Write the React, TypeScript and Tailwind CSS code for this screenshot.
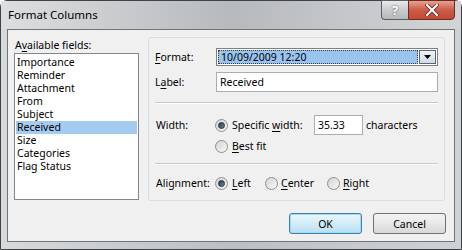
import React from "react";

const font = { fontFamily: '"Noto Sans", "Open Sans", sans-serif' };

function U({ children }: { children: React.ReactNode }) {
  return <span className="underline underline-offset-[2px] decoration-[1px]">{children}</span>;
}

function Radio({ checked }: { checked?: boolean }) {
  return (
    <div className="w-[13px] h-[13px] rounded-full border border-[#8e8f8f] bg-gradient-to-br from-[#d4d4d4] to-[#f8f8f8] flex items-center justify-center shrink-0">
      {checked && (
        <div className="w-[7px] h-[7px] rounded-full bg-gradient-to-br from-[#2c3c4c] to-[#6a8aa0] border border-[#1e2c3a]" />
      )}
    </div>
  );
}

export default function App() {
  const items = [
    "Importance",
    "Reminder",
    "Attachment",
    "From",
    "Subject",
    "Received",
    "Size",
    "Categories",
    "Flag Status",
  ];
  return (
    <div className="w-[462px] h-[250px] bg-white text-[10.5px] leading-[14px] text-black" style={font}>
      <div className="w-full h-full rounded-t-[7px] border border-[#3f4346] bg-gradient-to-r from-[#d7d9db] via-[#bcc0c3] to-[#cfd2d4] flex flex-col">
        {/* title bar */}
        <div className="h-[28px] flex items-start relative shrink-0 bg-gradient-to-r from-[#dcdedf] via-[#b7babd] to-[#d2d4d6]">
          <div className="pl-[7px] pt-[6px] text-[11.5px] leading-[16px]">Format Columns</div>
          <div className="ml-auto mr-[6px] flex h-[20px] -mt-[1px]">
            <div className="w-[27px] h-full border border-[#5b5e61] border-r-0 rounded-bl-[4px] bg-gradient-to-b from-[#e8eaec] via-[#c9ccce] to-[#b6b9bc] flex items-center justify-center text-[13px] font-bold text-white [text-shadow:0_0_2px_#444]">
              ?
            </div>
            <div className="w-[47px] h-full border border-[#6e2a22] rounded-br-[4px] bg-gradient-to-b from-[#e3a393] via-[#cc5a44] to-[#c24a36] flex items-center justify-center">
              <svg width="14" height="12" viewBox="0 0 14 12">
                <path d="M2 1 L12 11 M12 1 L2 11" stroke="#5a1a10" strokeWidth="3.6" strokeLinecap="round" />
                <path d="M2 1 L12 11 M12 1 L2 11" stroke="#ffffff" strokeWidth="2.2" strokeLinecap="round" />
              </svg>
            </div>
          </div>
        </div>
        {/* client area */}
        <div className="ml-[6px] w-[448px] h-[213px] border border-[#6f7478] bg-[#f0f0f0] flex shrink-0">
          {/* left column */}
          <div className="pl-[6px] pt-[8px] flex flex-col">
            <div className="leading-[14px] pl-[1px]">
              A<U>v</U>ailable fields:
            </div>
            <div className="mt-[1px] w-[125px] h-[147px] border border-[#828790] bg-white pt-[2px] px-[1px]">
              {items.map((it) => (
                <div
                  key={it}
                  className={
                    "h-[13px] leading-[13px] pl-[1px] " + (it === "Received" ? "bg-[#a6cbf1]" : "")
                  }
                >
                  {it}
                </div>
              ))}
            </div>
          </div>
          {/* right column */}
          <div className="ml-[9px] pt-[7px] w-[298px] flex flex-col">
            <div className="w-[297px] h-[164px] border border-[#d5dfe5] rounded-[3px] pl-[6px] pr-[6px] pt-[10px] flex flex-col">
              {/* Format */}
              <div className="flex items-center h-[18px]">
                <div className="w-[61px]">
                  <U>F</U>ormat:
                </div>
                <div className="w-[222px] h-[18px] border border-[#7b8085] bg-white flex items-stretch p-[1px]">
                  <div className="flex-1 bg-[#99c4f0] border border-dotted border-[#3a3a3a] leading-[12px] pl-[2px]">
                    10/09/2009 12:20
                  </div>
                  <div className="w-[17px] ml-[1px] border border-[#5d6670] bg-gradient-to-b from-[#eef3f7] to-[#cfdbe5] flex items-center justify-center">
                    <svg width="7" height="4" viewBox="0 0 7 4">
                      <path d="M0 0 H7 L3.5 4 Z" fill="#000" />
                    </svg>
                  </div>
                </div>
              </div>
              {/* Label */}
              <div className="flex items-center h-[20px] mt-[6px]">
                <div className="w-[61px]">
                  L<U>a</U>bel:
                </div>
                <div className="w-[222px] h-[20px] border border-[#abadb3] bg-white leading-[18px] pl-[3px]">
                  Received
                </div>
              </div>
              {/* separator */}
              <div className="mt-[10px] w-[283px] border-t border-[#c5c9cc] border-b border-b-white" />
              {/* Width */}
              <div className="flex items-center h-[20px] mt-[11px]">
                <div className="w-[60px] pl-[1px]">Width:</div>
                <Radio checked />
                <div className="ml-[4px] w-[82px]">
                  Specific <U>w</U>idth:
                </div>
                <div className="w-[49px] h-[20px] border border-[#abadb3] bg-white leading-[18px] pl-[3px]">
                  35.33
                </div>
                <div className="ml-[3px]">characters</div>
              </div>
              <div className="flex items-center h-[16px] mt-[3px]">
                <div className="w-[60px]" />
                <Radio />
                <div className="ml-[4px]">
                  <U>B</U>est fit
                </div>
              </div>
              {/* separator */}
              <div className="mt-[9px] w-[283px] border-t border-[#c5c9cc] border-b border-b-white" />
              {/* Alignment */}
              <div className="flex items-center h-[16px] mt-[10px]">
                <div className="w-[60px] pl-[1px]">Alignment:</div>
                <Radio checked />
                <div className="ml-[4px] w-[33px]">
                  <U>L</U>eft
                </div>
                <Radio />
                <div className="ml-[3px] w-[46px]">
                  <U>C</U>enter
                </div>
                <Radio />
                <div className="ml-[3px]">
                  <U>R</U>ight
                </div>
              </div>
            </div>
            {/* buttons */}
            <div className="mt-[12px] flex justify-end gap-[11px]">
              <div className="w-[73px] h-[21px] rounded-[3px] border border-[#3c7fb1] bg-gradient-to-b from-[#ecf7fd] via-[#d2ecf9] to-[#b7dff3] flex items-center justify-center shadow-[inset_0_0_0_1px_#9fdcf4]">
                OK
              </div>
              <div className="w-[73px] h-[21px] rounded-[3px] border border-[#707070] bg-gradient-to-b from-[#f4f4f4] via-[#e8e8e8] to-[#d8d8d8] flex items-center justify-center">
                Cancel
              </div>
            </div>
          </div>
        </div>
      </div>
    </div>
  );
}
